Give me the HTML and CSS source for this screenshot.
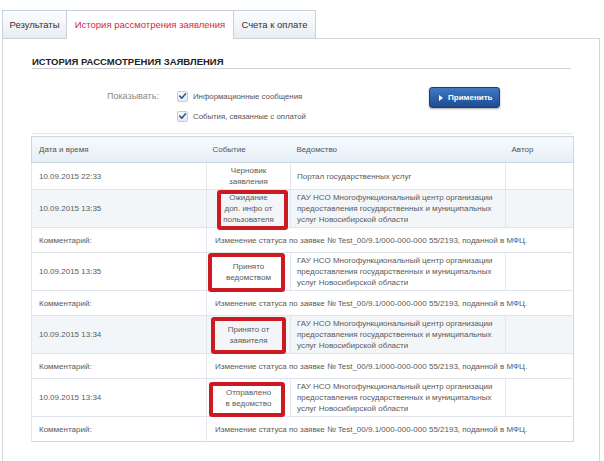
FILE: index.html
```html
<!DOCTYPE html>
<html lang="ru">
<head>
<meta charset="utf-8">
<title>История рассмотрения заявления</title>
<link rel="stylesheet" href="styles.css">
</head>
<body>
<div class="page">
  <div class="tabs">
    <div class="tab tab-results">Результаты</div>
    <div class="tab tab-history">История рассмотрения заявления</div>
    <div class="tab tab-bills">Счета к оплате</div>
  </div>
  <div class="panel">
    <h2 class="title">ИСТОРИЯ РАССМОТРЕНИЯ ЗАЯВЛЕНИЯ</h2>
    <div class="filter">
      <div class="filter-label">Показывать:</div>
      <div class="checks">
        <label class="check"><span class="box"><svg width="10" height="10" viewBox="0 0 10 10"><path d="M2 5.2 L4.2 7.4 L8.4 2.6" fill="none" stroke="#2b5a9c" stroke-width="1.8" stroke-linecap="round" stroke-linejoin="round"/></svg></span>Информационные сообщения</label>
        <label class="check"><span class="box"><svg width="10" height="10" viewBox="0 0 10 10"><path d="M2 5.2 L4.2 7.4 L8.4 2.6" fill="none" stroke="#2b5a9c" stroke-width="1.8" stroke-linecap="round" stroke-linejoin="round"/></svg></span>События, связанные с оплатой</label>
      </div>
      <button class="apply" type="button"><span class="tri"></span>Применить</button>
    </div>
    <table class="history">
      <colgroup>
        <col class="c-date"><col class="c-event"><col class="c-agency"><col class="c-author">
      </colgroup>
      <thead>
        <tr><th>Дата и время</th><th>Событие</th><th>Ведомство</th><th>Автор</th></tr>
      </thead>
      <tbody>
        <tr class="row">
          <td>10.09.2015 22:33</td>
          <td class="event">Черновик<br>заявления</td>
          <td>Портал государственных услуг</td>
          <td></td>
        </tr>
        <tr class="row alt">
          <td>10.09.2015 13:35</td>
          <td class="event">Ожидание<br>доп. инфо от<br>пользователя<span class="mark mark-1"></span></td>
          <td>ГАУ НСО Многофункциональный центр организации<br>предоставления государственных и муниципальных<br>услуг Новосибирской области</td>
          <td></td>
        </tr>
        <tr class="comment">
          <td>Комментарий:</td>
          <td colspan="3">Изменение статуса по заявке № Test_00/9.1/000-000-000 55/2193, поданной в МФЦ.</td>
        </tr>
        <tr class="row">
          <td>10.09.2015 13:35</td>
          <td class="event">Принято<br>ведомством<span class="mark mark-2"></span></td>
          <td>ГАУ НСО Многофункциональный центр организации<br>предоставления государственных и муниципальных<br>услуг Новосибирской области</td>
          <td></td>
        </tr>
        <tr class="comment">
          <td>Комментарий:</td>
          <td colspan="3">Изменение статуса по заявке № Test_00/9.1/000-000-000 55/2193, поданной в МФЦ.</td>
        </tr>
        <tr class="row alt">
          <td>10.09.2015 13:34</td>
          <td class="event">Принято от<br>заявителя<span class="mark mark-3"></span></td>
          <td>ГАУ НСО Многофункциональный центр организации<br>предоставления государственных и муниципальных<br>услуг Новосибирской области</td>
          <td></td>
        </tr>
        <tr class="comment">
          <td>Комментарий:</td>
          <td colspan="3">Изменение статуса по заявке № Test_00/9.1/000-000-000 55/2193, поданной в МФЦ.</td>
        </tr>
        <tr class="row">
          <td>10.09.2015 13:34</td>
          <td class="event">Отправлено<br>в ведомство<span class="mark mark-4"></span></td>
          <td>ГАУ НСО Многофункциональный центр организации<br>предоставления государственных и муниципальных<br>услуг Новосибирской области</td>
          <td></td>
        </tr>
        <tr class="comment">
          <td>Комментарий:</td>
          <td colspan="3">Изменение статуса по заявке № Test_00/9.1/000-000-000 55/2193, поданной в МФЦ.</td>
        </tr>
      </tbody>
    </table>
  </div>
</div>
</body>
</html>
```
FILE: styles.css
```css
html, body {
  margin: 0;
  background: #fff;
  font-family: "Liberation Sans", Arial, sans-serif;
}

.page {
  padding: 10px 4px 0 2px;
}

.tabs {
  display: flex;
  margin-bottom: -1px;
  position: relative;
  z-index: 1;
}

.tab {
  box-sizing: border-box;
  height: 29px;
  line-height: 27px;
  border: 1px solid #c7d1db;
  background: linear-gradient(#fdfdfe, #e8edf2);
  font-size: 9.5px;
  color: #333;
  text-align: center;
  white-space: nowrap;
}

.tab + .tab {
  margin-left: -1px;
}

.tab-results { width: 65px; }
.tab-history {
  width: 168px;
  background: #fff;
  border-bottom-color: #fff;
  color: #d3293c;
}
.tab-bills { width: 83px; }

.panel {
  border: 1px solid #cfd8e1;
  padding: 0 26px 40px 28px;
}

.title {
  margin: 17px 2px 0 1px;
  font-size: 9.5px;
  line-height: 12px;
  font-weight: bold;
  color: #222;
  border-bottom: 1px solid #d0d0d0;
}

.filter {
  display: flex;
  padding: 17px 73px 7px 76px;
  border-bottom: 1px solid #e6e9ec;
}

.filter-label {
  width: 70px;
  line-height: 20px;
  font-size: 9px;
  color: #8a8a8a;
}

.checks {
  display: flex;
  flex-direction: column;
}

.check {
  display: flex;
  align-items: center;
  height: 20px;
  font-size: 7.8px;
  color: #555;
}

.box {
  box-sizing: border-box;
  width: 11px;
  height: 11px;
  border: 1px solid #c3cdd7;
  border-radius: 2px;
  background: linear-gradient(#f7f9fb, #e6ebf0);
  margin-right: 5px;
  display: flex;
  align-items: center;
  justify-content: center;
}

.box svg { display: block; }

.apply {
  margin-left: auto;
  margin-top: 1px;
  box-sizing: border-box;
  width: 71px;
  height: 21px;
  padding: 0 0 0 9px;
  display: flex;
  align-items: center;
  border: 1px solid #173f7a;
  border-radius: 3px;
  background: linear-gradient(#4078c4, #1e4b90);
  box-shadow: 0 1px 2px rgba(0, 0, 0, 0.35);
  color: #fff;
  font-family: "Liberation Sans", Arial, sans-serif;
  font-size: 8px;
  font-weight: bold;
}

.tri {
  width: 0;
  height: 0;
  border-left: 4px solid #fff;
  border-top: 3px solid transparent;
  border-bottom: 3px solid transparent;
  margin-right: 5px;
}

.history {
  margin-top: 2px;
  width: 542px;
  table-layout: fixed;
  border-collapse: collapse;
  border: 1px solid #cfd8e1;
  font-size: 8px;
  line-height: 11px;
  color: #5a5a5a;
}

.c-date { width: 175px; }
.c-event { width: 84px; }
.c-agency { width: 215px; }
.c-author { width: 68px; }

.history th {
  height: 25px;
  padding: 0 6px;
  text-align: left;
  font-weight: normal;
  color: #555;
  background: linear-gradient(#f8fbfd, #e4edf6);
  border-bottom: 1px solid #cbd7e3;
}

.history th:first-child { padding-left: 7px; }

.history td {
  padding: 2px 6px;
  vertical-align: middle;
  border-top: 1px solid #dfe5eb;
  border-left: 1px solid #e2e7ed;
  white-space: nowrap;
}

.history td:first-child { padding-left: 7px; }

.row td { height: 22px; }
.row.alt td { background: #f3f6f9; }

.history td.event {
  position: relative;
  text-align: center;
  padding: 2px 2px;
}

.comment td {
  height: 20px;
  background: #fff;
}

.comment td + td { padding-left: 8px; }

.mark {
  position: absolute;
  box-sizing: border-box;
  border: 4px solid #cc1a22;
  border-radius: 3px;
  pointer-events: none;
}

.mark-1 { left: 10px; right: 2px; top: 0; bottom: -3px; }
.mark-2 { left: 1px; right: 5px; top: 0; bottom: -2px; }
.mark-3 { left: 4px; right: 4px; top: 1px; bottom: -1px; }
.mark-4 { left: 2px; right: 5px; top: 3px; bottom: -1px; }
```
